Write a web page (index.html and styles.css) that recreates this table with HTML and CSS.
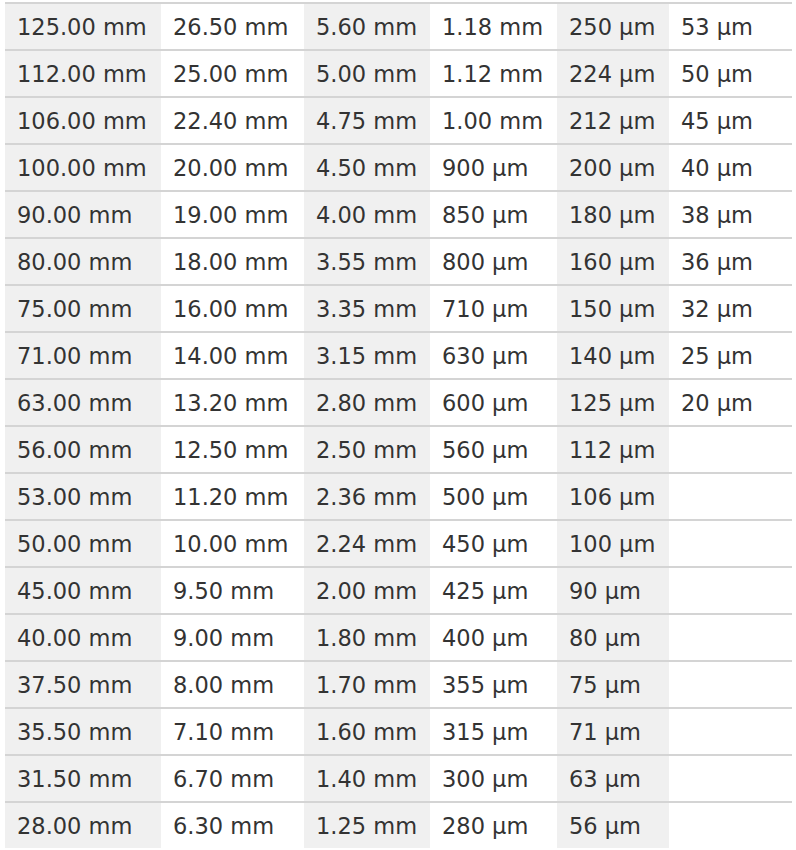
FILE: index.html
```html
<!DOCTYPE html>
<html>
<head>
<meta charset="utf-8">
<link rel="stylesheet" href="styles.css">
</head>
<body>
<table class="sieve">
<colgroup>
<col class="c1"><col class="c2"><col class="c3"><col class="c4"><col class="c5"><col class="c6">
</colgroup>
<tbody>
<tr><td>125.00 mm</td><td>26.50 mm</td><td>5.60 mm</td><td>1.18 mm</td><td>250 µm</td><td>53 µm</td></tr>
<tr><td>112.00 mm</td><td>25.00 mm</td><td>5.00 mm</td><td>1.12 mm</td><td>224 µm</td><td>50 µm</td></tr>
<tr><td>106.00 mm</td><td>22.40 mm</td><td>4.75 mm</td><td>1.00 mm</td><td>212 µm</td><td>45 µm</td></tr>
<tr><td>100.00 mm</td><td>20.00 mm</td><td>4.50 mm</td><td>900 µm</td><td>200 µm</td><td>40 µm</td></tr>
<tr><td>90.00 mm</td><td>19.00 mm</td><td>4.00 mm</td><td>850 µm</td><td>180 µm</td><td>38 µm</td></tr>
<tr><td>80.00 mm</td><td>18.00 mm</td><td>3.55 mm</td><td>800 µm</td><td>160 µm</td><td>36 µm</td></tr>
<tr><td>75.00 mm</td><td>16.00 mm</td><td>3.35 mm</td><td>710 µm</td><td>150 µm</td><td>32 µm</td></tr>
<tr><td>71.00 mm</td><td>14.00 mm</td><td>3.15 mm</td><td>630 µm</td><td>140 µm</td><td>25 µm</td></tr>
<tr><td>63.00 mm</td><td>13.20 mm</td><td>2.80 mm</td><td>600 µm</td><td>125 µm</td><td>20 µm</td></tr>
<tr><td>56.00 mm</td><td>12.50 mm</td><td>2.50 mm</td><td>560 µm</td><td>112 µm</td><td></td></tr>
<tr><td>53.00 mm</td><td>11.20 mm</td><td>2.36 mm</td><td>500 µm</td><td>106 µm</td><td></td></tr>
<tr><td>50.00 mm</td><td>10.00 mm</td><td>2.24 mm</td><td>450 µm</td><td>100 µm</td><td></td></tr>
<tr><td>45.00 mm</td><td>9.50 mm</td><td>2.00 mm</td><td>425 µm</td><td>90 µm</td><td></td></tr>
<tr><td>40.00 mm</td><td>9.00 mm</td><td>1.80 mm</td><td>400 µm</td><td>80 µm</td><td></td></tr>
<tr><td>37.50 mm</td><td>8.00 mm</td><td>1.70 mm</td><td>355 µm</td><td>75 µm</td><td></td></tr>
<tr><td>35.50 mm</td><td>7.10 mm</td><td>1.60 mm</td><td>315 µm</td><td>71 µm</td><td></td></tr>
<tr><td>31.50 mm</td><td>6.70 mm</td><td>1.40 mm</td><td>300 µm</td><td>63 µm</td><td></td></tr>
<tr><td>28.00 mm</td><td>6.30 mm</td><td>1.25 mm</td><td>280 µm</td><td>56 µm</td><td></td></tr>
</tbody>
</table>
</body>
</html>
```
FILE: styles.css
```css
html, body {
  margin: 0;
  padding: 0;
  background: #ffffff;
}

body {
  padding: 2px 0 0 5px;
}

.sieve {
  border-collapse: collapse;
  table-layout: fixed;
  width: 787px;
  font-family: "DejaVu Sans", Verdana, sans-serif;
  font-size: 22.5px;
  color: #333333;
  border-top: 2px solid #d4d4d4;
}

.c1 { width: 156px; }
.c2 { width: 143px; }
.c3 { width: 126px; }
.c4 { width: 127px; }
.c5 { width: 112px; }
.c6 { width: 123px; }

.sieve td {
  height: 43px;
  padding: 2px 0 0 12px;
  vertical-align: middle;
  white-space: nowrap;
  border-bottom: 2px solid #d4d4d4;
  line-height: 1;
}

.sieve tr:last-child td {
  border-bottom: none;
}

.sieve td:nth-child(odd) {
  background: #f0f0f0;
}
```
